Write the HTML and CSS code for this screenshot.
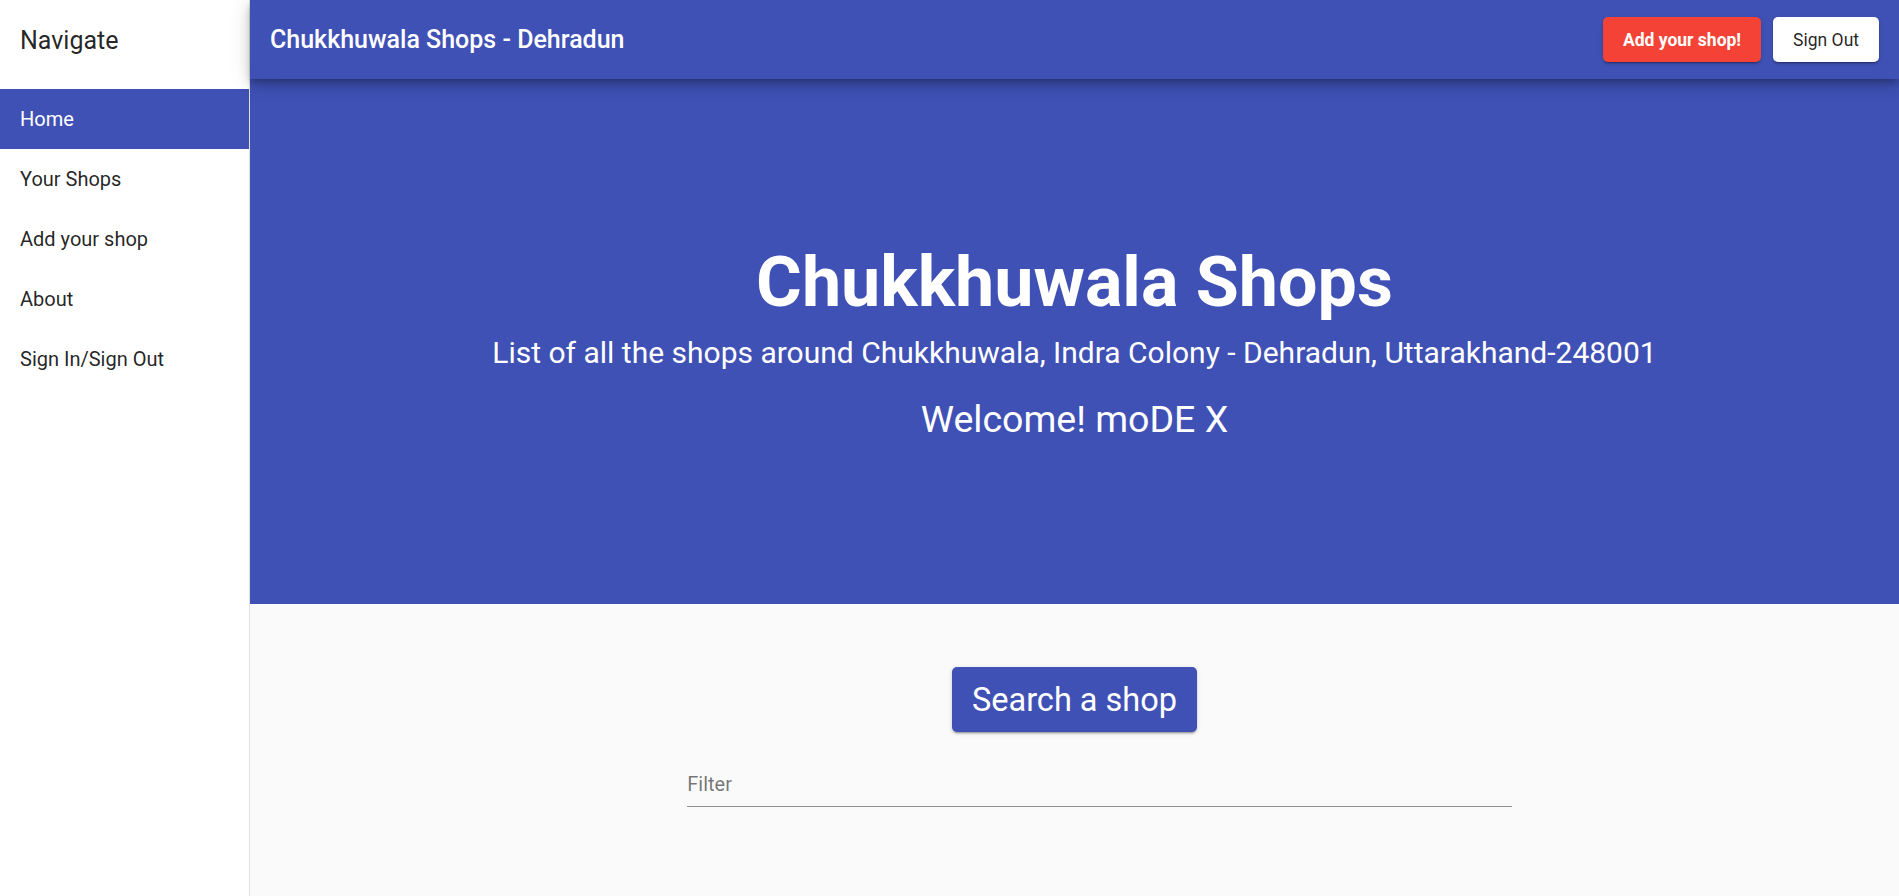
FILE: index.html
```html
<!DOCTYPE html>
<html lang="en">
<head>
<meta charset="utf-8">
<title>Chukkhuwala Shops - Dehradun</title>
<link rel="stylesheet" href="styles.css">
</head>
<body>
<div class="app">
  <aside class="sidenav">
    <div class="side-header">Navigate</div>
    <nav class="nav-list">
      <a class="nav-item active" href="#">Home</a>
      <a class="nav-item" href="#">Your Shops</a>
      <a class="nav-item" href="#">Add your shop</a>
      <a class="nav-item" href="#">About</a>
      <a class="nav-item" href="#">Sign In/Sign Out</a>
    </nav>
  </aside>
  <main class="main">
    <header class="toolbar">
      <span class="toolbar-title">Chukkhuwala Shops - Dehradun</span>
      <div class="toolbar-actions">
        <button class="btn btn-warn">Add your shop!</button>
        <button class="btn btn-light">Sign Out</button>
      </div>
    </header>
    <section class="hero">
      <h1 class="hero-title">Chukkhuwala Shops</h1>
      <p class="hero-sub">List of all the shops around Chukkhuwala, Indra Colony - Dehradun, Uttarakhand-248001</p>
      <p class="hero-welcome">Welcome! moDE X</p>
    </section>
    <section class="search">
      <button class="btn-search">Search a shop</button>
      <div class="filter-field">
        <input class="filter-input" type="text" placeholder="Filter">
      </div>
    </section>
  </main>
</div>
</body>
</html>
```

FILE: styles.css
```css
* { box-sizing: border-box; }
html, body { margin: 0; padding: 0; height: 100%; }
body {
  font-family: Roboto, "Helvetica Neue", "Liberation Sans", sans-serif;
  background: #fafafa;
  color: rgba(0,0,0,.87);
  overflow: hidden;
}
.app {
  display: flex;
  height: 896px;
}
.sidenav {
  width: 250px;
  flex: 0 0 250px;
  background: #fff;
  border-right: 1px solid #e0e0e0;
  display: flex;
  flex-direction: column;
}
.side-header {
  height: 80px;
  padding: 0 20px;
  display: flex;
  align-items: center;
  font-size: 25px;
  font-weight: 400;
  color: rgba(0,0,0,.87);
}
.nav-list {
  display: flex;
  flex-direction: column;
  padding-top: 9px;
}
.nav-item {
  height: 60px;
  display: flex;
  align-items: center;
  padding: 0 20px;
  font-size: 20px;
  color: rgba(0,0,0,.87);
  text-decoration: none;
}
.nav-item.active {
  background: #3f51b5;
  color: #fff;
}
.main {
  flex: 1;
  display: flex;
  flex-direction: column;
  min-width: 0;
}
.toolbar {
  height: 79px;
  flex: 0 0 79px;
  background: #3f51b5;
  color: #fff;
  display: flex;
  align-items: center;
  justify-content: space-between;
  padding: 0 20px;
  position: relative;
  z-index: 2;
  box-shadow: 0 4px 6px -1px rgba(0,0,0,.2), 0 7px 12px 0 rgba(0,0,0,.14), 0 1px 22px 0 rgba(0,0,0,.12);
}
.toolbar-title {
  font-size: 25px;
  font-weight: 500;
}
.toolbar-actions {
  display: flex;
  gap: 12px;
}
.btn {
  font-family: inherit;
  height: 45px;
  min-width: 80px;
  padding: 0 20px;
  border: none;
  border-radius: 5px;
  font-size: 17.5px;
  font-weight: 500;
  cursor: pointer;
  box-shadow: 0 3px 1px -2px rgba(0,0,0,.2), 0 2px 2px 0 rgba(0,0,0,.14), 0 1px 5px 0 rgba(0,0,0,.12);
}
.btn-warn {
  background: #f44336;
  color: #fff;
  font-weight: 700;
}
.btn-light {
  background: #fff;
  color: rgba(0,0,0,.87);
  font-weight: 400;
}
.hero {
  height: 525px;
  flex: 0 0 525px;
  background: #3f51b5;
  color: #fff;
  display: flex;
  flex-direction: column;
  align-items: center;
  justify-content: center;
  text-align: center;
}
.hero-title {
  margin: 0;
  font-size: 70px;
  line-height: 82px;
  font-weight: 700;
}
.hero-sub {
  margin: 12px 0 0;
  font-size: 30px;
  line-height: 36px;
  font-weight: 400;
}
.hero-welcome {
  margin: 26px 0 0;
  font-size: 37.5px;
  line-height: 45px;
  font-weight: 400;
}
.search {
  display: flex;
  flex-direction: column;
  align-items: center;
  padding-top: 63px;
}
.btn-search {
  font-family: inherit;
  height: 65px;
  padding: 0 20px;
  border: none;
  border-radius: 5px;
  background: #3f51b5;
  color: #fff;
  font-size: 32.5px;
  font-weight: 400;
  box-shadow: 0 3px 1px -2px rgba(0,0,0,.2), 0 2px 2px 0 rgba(0,0,0,.14), 0 1px 5px 0 rgba(0,0,0,.12);
}
.filter-field {
  align-self: flex-start;
  width: 50%;
  margin-left: calc(25% + 25px);
  margin-top: 36px;
  border-bottom: 1px solid rgba(0,0,0,.42);
}
.filter-input {
  width: 100%;
  border: none;
  outline: none;
  background: transparent;
  font-family: inherit;
  font-size: 20px;
  line-height: 24px;
  padding: 4px 0 10px;
  color: rgba(0,0,0,.87);
}
.filter-input::placeholder {
  color: rgba(0,0,0,.54);
}
```
